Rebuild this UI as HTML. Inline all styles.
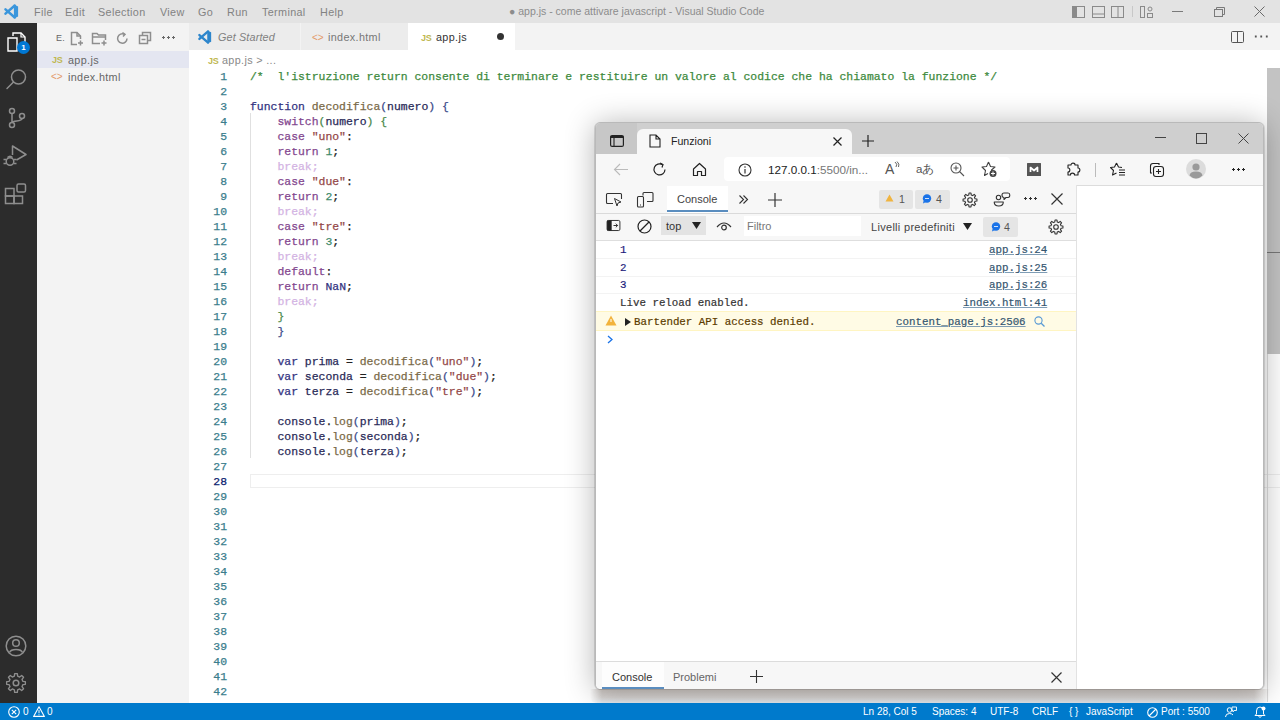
<!DOCTYPE html>
<html><head><meta charset="utf-8">
<style>
*{margin:0;padding:0;box-sizing:border-box}
html,body{width:1280px;height:720px;overflow:hidden;background:#fff;font-family:"Liberation Sans",sans-serif;position:relative}
.a{position:absolute}
svg{position:absolute;overflow:visible}
#title{left:0;top:0;width:1280px;height:23px;background:#e3e3e3}
.menu{top:6px;font-size:10.8px;letter-spacing:0.35px;color:#828282;white-space:nowrap;line-height:13px}
#act{left:0;top:23px;width:37px;height:680px;background:#2c2c2c}
#side{left:37px;top:23px;width:152px;height:680px;background:#f3f3f3}
#tabs{left:190px;top:23px;width:1090px;height:27px;background:#f3f3f3}
.tab{top:0;height:27px;background:#ececec}
.tt{font-size:10.8px;letter-spacing:0.35px;color:#777;white-space:nowrap;line-height:13px}
#editor{left:190px;top:50px;width:1090px;height:652px;background:#fff}
#status{left:0;top:703px;width:1280px;height:17px;background:#007acc;color:#fff;font-size:10px}
.st{top:3px;font-size:10px;line-height:12px;color:#fff;white-space:nowrap}
.code{font-family:"Liberation Mono",monospace;font-size:11.43px;line-height:15px;white-space:pre;-webkit-text-stroke:0.25px currentColor}
#nums{left:190px;top:69px;width:37px;text-align:right;color:#3a7d8c}
#src{left:250px;top:69px;color:#222}
.cm{color:#3d8a3d}.kw{color:#33337f}.fn{color:#7a6a48}.v{color:#2a2a58}.ct{color:#83478f}.s{color:#944848}.n{color:#3d8a6a}.b1{color:#3a4a8a}.b2{color:#4a8a4a}.br{color:#d3b3e3}.cn{color:#33337f}
.ic{stroke:#8e8e8e;fill:none;stroke-width:1.5}
#bw{left:595px;top:122px;width:669px;height:568px;border-radius:6px;background:#f7f7f7;box-shadow:-1px 0 0 rgba(0,0,0,0.12),1px 0 0 rgba(0,0,0,0.10),0 2px 30px rgba(0,0,0,0.30);overflow:hidden;border:1px solid #b9b9b9}
.bi{stroke:#222;fill:none;stroke-width:1.1}
.dt{font-size:10.6px;color:#333;white-space:nowrap;line-height:13px}
.cmsg{font-family:"Liberation Mono",monospace;font-size:10.8px;line-height:13px;white-space:pre;color:#333;-webkit-text-stroke:0.2px currentColor}
.lnk{font-family:"Liberation Mono",monospace;font-size:10.8px;line-height:13px;white-space:pre;color:#35566f;text-decoration:underline;text-decoration-color:#7f9db5;-webkit-text-stroke:0.2px currentColor}
</style></head><body>
<!-- TITLE BAR -->
<div id="title" class="a">
  <svg style="left:4px;top:4px" width="15" height="15" viewBox="0 0 100 100"><path d="M72 10 L10 64 M72 90 L10 36" stroke="#3a96dc" stroke-width="17" stroke-linecap="round"/><path d="M66 4 L94 16 V84 L66 96 Z" fill="#3a96dc"/></svg>
  <div class="a menu" style="left:34px">File</div>
  <div class="a menu" style="left:65px">Edit</div>
  <div class="a menu" style="left:98px">Selection</div>
  <div class="a menu" style="left:160px">View</div>
  <div class="a menu" style="left:198px">Go</div>
  <div class="a menu" style="left:227px">Run</div>
  <div class="a menu" style="left:262px">Terminal</div>
  <div class="a menu" style="left:320px">Help</div>
  <div class="a menu" style="left:509px;top:5px;font-size:10.5px;letter-spacing:0;color:#8c8c8c">● app.js - come attivare javascript - Visual Studio Code</div>
  <svg style="left:1072px;top:6px" width="13" height="12"><rect x="0.5" y="0.5" width="12" height="11" fill="none" stroke="#8a8a8a"/><rect x="1" y="1" width="4" height="10" fill="#8a8a8a"/></svg>
  <svg style="left:1092px;top:6px" width="13" height="12"><rect x="0.5" y="0.5" width="12" height="11" fill="none" stroke="#8a8a8a"/><line x1="0" y1="8" x2="13" y2="8" stroke="#8a8a8a"/></svg>
  <svg style="left:1111px;top:6px" width="13" height="12"><rect x="0.5" y="0.5" width="12" height="11" fill="none" stroke="#8a8a8a"/><line x1="7" y1="0" x2="7" y2="12" stroke="#8a8a8a"/></svg>
  <div class="a" style="left:1132px;top:6px;width:1px;height:11px;background:#c8c8c8"></div>
  <svg style="left:1140px;top:6px" width="13" height="12"><rect x="0.5" y="0.5" width="4" height="11" fill="none" stroke="#8a8a8a"/><circle cx="10" cy="3" r="2" fill="none" stroke="#8a8a8a"/><rect x="7.5" y="7.5" width="5" height="4" fill="none" stroke="#8a8a8a"/></svg>
  <div class="a" style="left:1172px;top:11px;width:11px;height:1px;background:#7a7a7a"></div>
  <svg style="left:1214px;top:7px" width="11" height="10"><rect x="0.5" y="2.5" width="8" height="7" fill="none" stroke="#7a7a7a"/><path d="M2.5 2.5 V0.5 H10.5 V7.5 H8.5" fill="none" stroke="#7a7a7a"/></svg>
  <svg style="left:1254px;top:6px" width="11" height="11"><path d="M0.5 0.5 L10.5 10.5 M10.5 0.5 L0.5 10.5" stroke="#6a6a6a" stroke-width="1"/></svg>
</div>

<!-- ACTIVITY BAR -->
<div id="act" class="a">
  <svg style="left:6px;top:8px" width="22" height="22" viewBox="0 0 22 22"><path d="M7 5 V2 H15 L19 6 V16 H14" fill="none" stroke="#fff" stroke-width="1.4"/><path d="M2 7 H11 V20 H2 Z" fill="none" stroke="#fff" stroke-width="1.4"/><path d="M15 2 V6 H19" fill="none" stroke="#fff" stroke-width="1.2"/></svg>
  <div class="a" style="left:17px;top:18px;width:13px;height:13px;border-radius:50%;background:#0078d4;color:#fff;font-size:8px;line-height:13px;text-align:center;font-weight:bold">1</div>
  <svg style="left:0;top:45px" width="37" height="30" viewBox="0 0 37 30"><circle cx="18.5" cy="9" r="7" class="ic" stroke-width="1.5"/><path d="M13.5 14 L7 20.5" class="ic" stroke-width="1.7" stroke-linecap="round"/></svg>
  <svg style="left:6px;top:84px" width="22" height="22" viewBox="0 0 22 22"><circle cx="6" cy="4" r="2.5" class="ic"/><circle cx="6" cy="18" r="2.5" class="ic"/><circle cx="16" cy="9" r="2.5" class="ic"/><path d="M6 6.5 V15.5 M16 11.5 C16 15 7 13 6 15.5" class="ic"/></svg>
  <svg style="left:0;top:118px" width="37" height="30" viewBox="0 0 37 30"><path d="M12.5 14 V5 L26 13.5 L16.5 19" class="ic" stroke-width="1.4" stroke-linejoin="round"/><circle cx="10" cy="20.5" r="3.8" class="ic" stroke-width="1.4"/><path d="M7.5 16.5 Q10 14 12.5 16.5 M3.5 18.5 H6 M3.5 22.5 H6 M14 18.5 H16.5 M14 22.5 H16.5" class="ic" stroke-width="1.3"/></svg>
  <svg style="left:0;top:158px" width="37" height="30" viewBox="0 0 37 30"><rect x="5.5" y="7.5" width="8.5" height="7.5" class="ic" stroke-width="1.4"/><rect x="5.5" y="15" width="8.5" height="7.5" class="ic" stroke-width="1.4"/><rect x="14" y="15" width="8.5" height="7.5" class="ic" stroke-width="1.4"/><rect x="17" y="3" width="8.5" height="8" rx="1.5" class="ic" stroke-width="1.4"/></svg>
  <svg style="left:4px;top:611px" width="24" height="24" viewBox="0 0 24 24"><circle cx="12" cy="12" r="9.8" class="ic" stroke-width="1.4"/><circle cx="12" cy="9" r="3.3" class="ic" stroke-width="1.5"/><path d="M5.5 18.5 C7 14.5 17 14.5 18.5 18.5" class="ic" stroke-width="1.5"/></svg>
  <svg style="left:4px;top:648px" width="24" height="24" viewBox="0 0 24 24"><path d="M22.40 10.52 L22.40 13.48 L19.58 13.82 L18.65 16.08 L20.40 18.30 L18.30 20.40 L16.08 18.65 L13.82 19.58 L13.48 22.40 L10.52 22.40 L10.18 19.58 L7.92 18.65 L5.70 20.40 L3.60 18.30 L5.35 16.08 L4.42 13.82 L1.60 13.48 L1.60 10.52 L4.42 10.18 L5.35 7.92 L3.60 5.70 L5.70 3.60 L7.92 5.35 L10.18 4.42 L10.52 1.60 L13.48 1.60 L13.82 4.42 L16.08 5.35 L18.30 3.60 L20.40 5.70 L18.65 7.92 L19.58 10.18 Z" class="ic" stroke-width="1.4" stroke-linejoin="round" transform="translate(12 12) scale(0.9) translate(-12 -12)"/><circle cx="12" cy="12" r="2.8" class="ic" stroke-width="1.4"/></svg>
</div>

<!-- SIDEBAR -->
<div id="side" class="a">
  <div class="a tt" style="left:19px;top:9px;font-size:9px;color:#666">E.</div>
  <svg style="left:33px;top:9px" width="14" height="14" viewBox="0 0 14 14"><path d="M7 12.5 H1.5 V0.5 H7 L10.5 4 V7" class="ic" stroke="#666" stroke-width="1"/><path d="M7 0.5 V4 H10.5 M10.5 8.5 V13.5 M8 11 H13" class="ic" stroke="#666" stroke-width="1"/></svg>
  <svg style="left:55px;top:9px" width="15" height="14" viewBox="0 0 15 14"><path d="M8 11.5 H0.5 V1.5 H5 L6.5 3 H13.5 V8" class="ic" stroke="#666" stroke-width="1"/><path d="M0.5 5 H13.5 M12 8.5 V13.5 M9.5 11 H14.5" class="ic" stroke="#666" stroke-width="1"/></svg>
  <svg style="left:79px;top:9px" width="13" height="13" viewBox="0 0 13 13"><path d="M11 6.5 A4.7 4.7 0 1 1 8.5 2.3" class="ic" stroke="#666" stroke-width="1.1"/><path d="M6.5 0.5 L9 2.3 L7 4.5" class="ic" stroke="#666" stroke-width="1.1"/></svg>
  <svg style="left:102px;top:9px" width="13" height="13" viewBox="0 0 13 13"><rect x="0.5" y="3.5" width="8" height="8" class="ic" stroke="#666" stroke-width="1"/><path d="M3.5 3.5 V0.5 H11.5 V8.5 H8.5 M2.5 7.5 H6.5" class="ic" stroke="#666" stroke-width="1"/></svg>
  <div class="a" style="left:124px;top:13px;width:14px;height:3px;background:radial-gradient(circle,#666 1px,transparent 1.2px) 0 0/5px 3px"></div>
  <div class="a" style="left:0;top:28px;width:152px;height:17px;background:#e4e6f1"></div>
  <div class="a" style="left:15px;top:32px;font-size:9px;font-weight:bold;color:#c0b850;line-height:10px;letter-spacing:-0.3px">JS</div>
  <div class="a tt" style="left:31px;top:31px;color:#666">app.js</div>
  <div class="a" style="left:14px;top:48px;font-size:10px;color:#e39a6a;line-height:11px">&lt;&gt;</div>
  <div class="a tt" style="left:31px;top:48px;color:#666">index.html</div>
</div>

<!-- TABS -->
<div class="a" style="left:189px;top:23px;width:1px;height:27px;background:#ececec"></div>
<div id="tabs" class="a">
  <div class="a tab" style="left:0;width:110px"></div>
  <div class="a tab" style="left:110px;width:108px;border-left:1px solid #f3f3f3"></div>
  <div class="a tab" style="left:218px;width:107px;background:#fff"></div>
  <svg style="left:8px;top:7px" width="14" height="14" viewBox="0 0 100 100"><path d="M72 10 L10 64 M72 90 L10 36" stroke="#2d86cc" stroke-width="17" stroke-linecap="round"/><path d="M66 4 L94 16 V84 L66 96 Z" fill="#2d86cc"/></svg>
  <div class="a tt" style="left:28px;top:8px;font-style:italic;letter-spacing:0.15px;color:#808080">Get Started</div>
  <div class="a" style="left:122px;top:9px;font-size:10px;color:#e39a6a;line-height:11px">&lt;&gt;</div>
  <div class="a tt" style="left:138px;top:8px">index.html</div>
  <div class="a" style="left:231px;top:10px;font-size:9px;font-weight:bold;color:#c0b850;line-height:10px;letter-spacing:-0.3px">JS</div>
  <div class="a tt" style="left:246px;top:8px;color:#333">app.js</div>
  <div class="a" style="left:307px;top:10px;width:7px;height:7px;border-radius:50%;background:#333"></div>
  <svg style="left:1041px;top:8px" width="13" height="12"><rect x="0.5" y="0.5" width="12" height="11" rx="1" fill="none" stroke="#555"/><line x1="6.5" y1="0" x2="6.5" y2="12" stroke="#555"/></svg>
  <div class="a" style="left:1063px;top:12px;width:16px;height:3px;background:radial-gradient(circle,#555 1px,transparent 1.2px) 0 0/5.5px 3px"></div>
</div>

<!-- EDITOR -->
<div id="editor" class="a">
  <div class="a" style="left:18px;top:6px;font-size:9px;font-weight:bold;color:#c0b850;line-height:10px;letter-spacing:-0.3px">JS</div>
  <div class="a tt" style="left:32px;top:4px;color:#888">app.js &gt; ...</div>
  <div class="a" style="left:60px;top:424px;width:1030px;height:14px;border:1px solid #eeeeee;border-right:none"></div>
  <div class="a" style="left:60px;top:63px;width:1px;height:345px;background:#e0e0e0"></div>
  <!-- scrollbar -->
  <div class="a" style="left:1077px;top:18px;width:1px;height:634px;background:#dedede"></div>
  <div class="a" style="left:1077px;top:18px;width:13px;height:286px;background:#c3c3c3"></div>
  <div class="a" style="left:1077px;top:202px;width:13px;height:1px;background:#777"></div>
</div>
<div id="nums" class="a code">1
2
3
4
5
6
7
8
9
10
11
12
13
14
15
16
17
18
19
20
21
22
23
24
25
26
27
28
29
30
31
32
33
34
35
36
37
38
39
40
41
42</div>
<div class="a code" style="left:190px;top:474px;width:37px;text-align:right;color:#0b216f;background:#fff">28</div>
<div id="src" class="a code"><span class="cm">/*  l'istruzione return consente di terminare e restituire un valore al codice che ha chiamato la funzione */</span>

<span class="kw">function</span> <span class="fn">decodifica</span><span class="b1">(</span><span class="v">numero</span><span class="b1">)</span> <span class="b1">{</span>
    <span class="ct">switch</span><span class="b2">(</span><span class="v">numero</span><span class="b2">)</span> <span class="b2">{</span>
    <span class="ct">case</span> <span class="s">"uno"</span>:
    <span class="ct">return</span> <span class="n">1</span>;
    <span class="br">break;</span>
    <span class="ct">case</span> <span class="s">"due"</span>:
    <span class="ct">return</span> <span class="n">2</span>;
    <span class="br">break;</span>
    <span class="ct">case</span> <span class="s">"tre"</span>:
    <span class="ct">return</span> <span class="n">3</span>;
    <span class="br">break;</span>
    <span class="ct">default</span>:
    <span class="ct">return</span> <span class="cn">NaN</span>;
    <span class="br">break;</span>
    <span class="b2">}</span>
    <span class="b1">}</span>

    <span class="kw">var</span> <span class="v">prima</span> = <span class="fn">decodifica</span><span class="b1">(</span><span class="s">"uno"</span><span class="b1">)</span>;
    <span class="kw">var</span> <span class="v">seconda</span> = <span class="fn">decodifica</span><span class="b1">(</span><span class="s">"due"</span><span class="b1">)</span>;
    <span class="kw">var</span> <span class="v">terza</span> = <span class="fn">decodifica</span><span class="b1">(</span><span class="s">"tre"</span><span class="b1">)</span>;

    <span class="v">console</span>.<span class="fn">log</span><span class="b1">(</span><span class="v">prima</span><span class="b1">)</span>;
    <span class="v">console</span>.<span class="fn">log</span><span class="b1">(</span><span class="v">seconda</span><span class="b1">)</span>;
    <span class="v">console</span>.<span class="fn">log</span><span class="b1">(</span><span class="v">terza</span><span class="b1">)</span>;

</div>

<!-- BROWSER WINDOW -->
<div id="bw" class="a">
  <div class="a" style="left:0;top:0;width:668px;height:31px;background:#cfcfcf"></div>
  <div class="a" style="left:0;top:0;width:41px;height:31px;background:#c7c7c7"></div>
  <svg style="left:14px;top:12px" width="14" height="12"><rect x="0.6" y="0.6" width="12.8" height="10.8" rx="1.5" fill="none" stroke="#222" stroke-width="1.2"/><line x1="0.6" y1="2" x2="13.4" y2="2" stroke="#222" stroke-width="2"/><line x1="4" y1="2" x2="4" y2="11" stroke="#222" stroke-width="1.1"/></svg>
  <div class="a" style="left:41px;top:6px;width:215px;height:26px;background:#f7f7f7;border-radius:6px 6px 0 0"></div>
  <svg style="left:53px;top:11px" width="12" height="14" viewBox="0 0 12 14"><path d="M1 1 H7 L11 5 V13 H1 Z M7 1 V5 H11" fill="none" stroke="#222" stroke-width="1.1"/></svg>
  <div class="a dt" style="left:75px;top:12px;color:#222">Funzioni</div>
  <svg style="left:237px;top:14px" width="9" height="9"><path d="M0.5 0.5 L8.5 8.5 M8.5 0.5 L0.5 8.5" stroke="#222" stroke-width="1.2"/></svg>
  <svg style="left:266px;top:12px" width="12" height="12"><path d="M6 0 V12 M0 6 H12" stroke="#222" stroke-width="1.2"/></svg>
  <svg style="left:559px;top:14px" width="11" height="2"><line x1="0" y1="0.5" x2="11" y2="0.5" stroke="#444" stroke-width="1"/></svg>
  <svg style="left:600px;top:10px" width="11" height="11"><rect x="0.5" y="0.5" width="10" height="10" fill="none" stroke="#444"/></svg>
  <svg style="left:642px;top:10px" width="11" height="11"><path d="M0.5 0.5 L10.5 10.5 M10.5 0.5 L0.5 10.5" stroke="#444" stroke-width="1"/></svg>
  <!-- toolbar -->
  <svg style="left:17px;top:40px" width="16" height="13"><path d="M1 6.5 H15 M7 1 L1.5 6.5 L7 12" fill="none" stroke="#bbb" stroke-width="1.1"/></svg>
  <svg style="left:56px;top:39px" width="15" height="15" viewBox="0 0 15 15"><path d="M13 7.5 A5.5 5.5 0 1 1 10.5 2.8" fill="none" stroke="#222" stroke-width="1.2"/><path d="M8 1 L11 2.5 L10 5.5" fill="none" stroke="#222" stroke-width="1.2"/></svg>
  <svg style="left:96px;top:39px" width="15" height="15" viewBox="0 0 15 15"><path d="M1.5 7 L7.5 1.5 L13.5 7 V13.5 H9.5 V9.5 H5.5 V13.5 H1.5 Z" fill="none" stroke="#222" stroke-width="1.2" stroke-linejoin="round"/></svg>
  <div class="a" style="left:128px;top:34px;width:286px;height:24px;background:#fff;border-radius:4px"></div>
  <svg style="left:142px;top:40px" width="14" height="14" viewBox="0 0 14 14"><circle cx="7" cy="7" r="6" fill="none" stroke="#333" stroke-width="1.1"/><path d="M7 6 V10.5" stroke="#333" stroke-width="1.2"/><circle cx="7" cy="4" r="0.8" fill="#333"/></svg>
  <div class="a dt" style="left:172px;top:40px;font-size:11.7px;line-height:14px;color:#222">127.0.0.1<span style="color:#777">:5500/in...</span></div>
  <div class="a dt" style="left:289px;top:38px;font-size:14px;color:#555;line-height:16px">A</div>
  <svg style="left:298px;top:38px" width="6" height="7"><path d="M1 1 Q4 3 2 6 M3 0.5 Q6 3 4.5 6" fill="none" stroke="#555" stroke-width="0.9"/></svg>
  <div class="a dt" style="left:320px;top:39px;font-size:11.5px;color:#555;line-height:14px">aあ</div>
  <svg style="left:354px;top:39px" width="15" height="15" viewBox="0 0 15 15"><circle cx="6" cy="6" r="5" fill="none" stroke="#555" stroke-width="1.1"/><path d="M9.5 9.5 L14 14 M6 3.5 V8.5 M3.5 6 H8.5" stroke="#555" stroke-width="1.1"/></svg>
  <svg style="left:385px;top:38px" width="17" height="17" viewBox="0 0 17 17"><path d="M7.5 1 L9.5 5.5 L14 6 L10.5 9 L11 11 M7.5 1 L5.5 5.5 L1 6 L4.5 9.5 L3.5 14.5 L7 12.5" fill="none" stroke="#444" stroke-width="1.1" stroke-linejoin="round"/><circle cx="12" cy="12.5" r="3.5" fill="#444"/><path d="M12 10.5 V14.5 M10 12.5 H14" stroke="#fff" stroke-width="1"/></svg>
  <svg style="left:431px;top:40px" width="14" height="13"><rect x="0" y="0" width="14" height="13" rx="0.5" fill="#555"/><path d="M3.5 9 V4.5 L7 7.5 L10.5 4.5 V9" fill="none" stroke="#fff" stroke-width="1.7" stroke-linejoin="round"/></svg>
  <svg style="left:470px;top:39px" width="15" height="15" viewBox="0 0 15 15"><path d="M5 3 C5 0.5 9 0.5 9 3 H12 V6 C14.5 6 14.5 10 12 10 V13 H8.5 C8.5 10.5 4.5 10.5 4.5 13 H2 V10 C4.5 10 4.5 6 2 6 V3 Z" fill="none" stroke="#222" stroke-width="1.1" stroke-linejoin="round"/></svg>
  <div class="a" style="left:499px;top:40px;width:1px;height:14px;background:#bbb"></div>
  <svg style="left:514px;top:39px" width="16" height="15" viewBox="0 0 16 15"><path d="M6.5 1 L8.5 5 L12 5.5 M6.5 1 L4.5 5 L0.5 5.5 L3.5 8.5 L2.5 13 L6.5 11" fill="none" stroke="#222" stroke-width="1.1" stroke-linejoin="round"/><path d="M9 8 H15 M9 10.5 H15 M9 13 H15" stroke="#222" stroke-width="1.1"/></svg>
  <svg style="left:553px;top:39px" width="16" height="16" viewBox="0 0 16 16"><path d="M3 11 H1.5 V4 Q1.5 1.5 4 1.5 H10 V3" fill="none" stroke="#222" stroke-width="1.1"/><rect x="4.5" y="4.5" width="10" height="10" rx="2.5" fill="none" stroke="#222" stroke-width="1.1"/><path d="M9.5 7 V12 M7 9.5 H12" stroke="#222" stroke-width="1.1"/></svg>
  <svg style="left:590px;top:36px" width="20" height="20" viewBox="0 0 20 20"><circle cx="10" cy="10" r="10" fill="#dcdcdc"/><circle cx="10" cy="8" r="3.6" fill="#9a9a9a"/><path d="M3.5 16.5 Q4 12.5 10 12.5 Q16 12.5 16.5 16.5 Q13.5 19.5 10 19.5 Q6.5 19.5 3.5 16.5 Z" fill="#9a9a9a"/></svg>
  <div class="a" style="left:635px;top:45px;width:15px;height:3px;background:radial-gradient(circle,#222 1.1px,transparent 1.3px) 0 0/5px 3px"></div>
  <div class="a" style="left:0;top:62px;width:668px;height:1px;background:#dcdcdc"></div>

  <!-- DEVTOOLS -->
  <div class="a" style="left:0;top:63px;width:480px;height:504px;background:#fff"></div>
  <div class="a" style="left:481px;top:63px;width:187px;height:504px;background:#fff"></div>
  <div class="a" style="left:0;top:62px;width:480px;height:29px;background:#f7f7f7;border-bottom:1px solid #dadada"></div>
  <svg style="left:10px;top:70px" width="17" height="14" viewBox="0 0 17 14"><path d="M7 10.5 H1.5 Q0.5 10.5 0.5 9.5 V1.5 Q0.5 0.5 1.5 0.5 H14.5 Q15.5 0.5 15.5 1.5 V6" fill="none" stroke="#333" stroke-width="1.1"/><path d="M8.5 5.5 L15 9 L12 10 L11 13 Z" fill="none" stroke="#333" stroke-width="1"/></svg>
  <svg style="left:41px;top:69px" width="17" height="16" viewBox="0 0 17 16"><path d="M6 3.5 V1.5 Q6 0.5 7 0.5 H15 Q16 0.5 16 1.5 V8.5 Q16 9.5 15 9.5 H10" fill="none" stroke="#333" stroke-width="1.1"/><rect x="0.5" y="4.5" width="6" height="10.5" rx="1" fill="none" stroke="#333" stroke-width="1.1"/><path d="M3 13 H4" stroke="#333"/></svg>
  <div class="a" style="left:71px;top:63px;width:61px;height:27px;background:#fff"></div>
  <div class="a" style="left:71px;top:87px;width:61px;height:2px;background:#5a8dbf"></div>
  <div class="a dt" style="left:81px;top:70px;font-size:11px;color:#444">Console</div>
  <svg style="left:143px;top:72px" width="10" height="9"><path d="M0.5 0.5 L4.5 4.5 L0.5 8.5 M4.5 0.5 L8.5 4.5 L4.5 8.5" fill="none" stroke="#333" stroke-width="1.1"/></svg>
  <svg style="left:172px;top:70px" width="14" height="14"><path d="M7 0 V14 M0 7 H14" stroke="#333" stroke-width="1.2"/></svg>
  <div class="a" style="left:283px;top:67px;width:34px;height:19px;background:#e5e5e5;border-radius:2px"></div>
  <svg style="left:289px;top:71px" width="9" height="8"><path d="M4.5 0.5 L8.5 7.5 H0.5 Z" fill="#f0b440"/></svg>
  <div class="a dt" style="left:303px;top:70px;color:#555">1</div>
  <div class="a" style="left:319px;top:67px;width:35px;height:19px;background:#e5e5e5;border-radius:2px"></div>
  <svg style="left:326px;top:71px" width="10" height="10"><circle cx="5" cy="4.5" r="4.2" fill="#1a73e8"/><path d="M1.5 7 L1 9.5 L4 8" fill="#1a73e8"/><path d="M3 4.5 H7" stroke="#fff" stroke-width="0.8"/></svg>
  <div class="a dt" style="left:340px;top:70px;color:#555">4</div>
  <svg style="left:366px;top:69px" width="16" height="16" viewBox="0 0 16 16"><path d="M14.93 7.01 L14.93 8.99 L13.06 9.21 L12.43 10.72 L13.60 12.20 L12.20 13.60 L10.72 12.43 L9.21 13.06 L8.99 14.93 L7.01 14.93 L6.79 13.06 L5.28 12.43 L3.80 13.60 L2.40 12.20 L3.57 10.72 L2.94 9.21 L1.07 8.99 L1.07 7.01 L2.94 6.79 L3.57 5.28 L2.40 3.80 L3.80 2.40 L5.28 3.57 L6.79 2.94 L7.01 1.07 L8.99 1.07 L9.21 2.94 L10.72 3.57 L12.20 2.40 L13.60 3.80 L12.43 5.28 L13.06 6.79 Z" fill="none" stroke="#333" stroke-width="1.1" stroke-linejoin="round"/><circle cx="8" cy="8" r="2.3" fill="none" stroke="#333" stroke-width="1.1"/></svg>
  <svg style="left:397px;top:67px" width="18" height="17" viewBox="0 0 18 17"><circle cx="5.5" cy="7.5" r="2.2" fill="none" stroke="#333" stroke-width="1.1"/><path d="M1.2 12 H10.3 Q10.3 16 5.75 16 Q1.2 16 1.2 12 Z" fill="none" stroke="#333" stroke-width="1.1" stroke-linejoin="round"/><path d="M11 3 H15 Q16.8 3 16.8 5 Q16.8 7.5 15 7.5 H13 L11 9.5 V7.5 Q9 7.5 9 5 Q9 3 11 3 Z" fill="none" stroke="#333" stroke-width="1.1" stroke-linejoin="round"/></svg>
  <div class="a" style="left:427px;top:74px;width:15px;height:3px;background:radial-gradient(circle,#333 1.1px,transparent 1.3px) 0 0/5px 3px"></div>
  <svg style="left:455px;top:70px" width="12" height="12"><path d="M0.5 0.5 L11.5 11.5 M11.5 0.5 L0.5 11.5" stroke="#333" stroke-width="1.2"/></svg>

  <div class="a" style="left:0;top:91px;width:480px;height:27px;background:#f7f7f7;border-bottom:1px solid #dedede"></div>
  <svg style="left:10px;top:97px" width="15" height="11" viewBox="0 0 15 12"><rect x="0.5" y="0.5" width="14" height="11" rx="1.5" fill="none" stroke="#222" stroke-width="1"/><rect x="0.5" y="0.5" width="5" height="11" fill="#222"/><path d="M7.5 6 H12 M10 4 L12 6 L10 8" fill="none" stroke="#222" stroke-width="1"/></svg>
  <svg style="left:41px;top:96px" width="15" height="15" viewBox="0 0 15 15"><circle cx="7.5" cy="7.5" r="6.5" fill="none" stroke="#222" stroke-width="1.2"/><path d="M3 12 L12 3" stroke="#222" stroke-width="1.2"/></svg>
  <div class="a" style="left:65px;top:93px;width:45px;height:19px;background:#e3e3e3"></div>
  <div class="a dt" style="left:70px;top:97px;font-size:11px;color:#333">top</div>
  <svg style="left:96px;top:99px" width="9" height="7"><path d="M0 0 H9 L4.5 7 Z" fill="#222"/></svg>
  <svg style="left:120px;top:98px" width="16" height="10" viewBox="0 0 16 10"><path d="M1 6 Q8 -2 15 6" fill="none" stroke="#333" stroke-width="1.2"/><circle cx="8" cy="6.5" r="2.3" fill="none" stroke="#333" stroke-width="1.2"/></svg>
  <div class="a" style="left:148px;top:93px;width:117px;height:20px;background:#fff"></div>
  <div class="a dt" style="left:151px;top:97px;font-size:11px;color:#777">Filtro</div>
  <div class="a dt" style="left:275px;top:98px;font-size:11px;letter-spacing:0.3px;color:#444">Livelli predefiniti</div>
  <svg style="left:367px;top:100px" width="9" height="7"><path d="M0 0 H9 L4.5 7 Z" fill="#222"/></svg>
  <div class="a" style="left:387px;top:94px;width:35px;height:20px;background:#e5e5e5;border-radius:2px"></div>
  <svg style="left:395px;top:99px" width="10" height="10"><circle cx="5" cy="4.5" r="4.2" fill="#1a73e8"/><path d="M1.5 7 L1 9.5 L4 8" fill="#1a73e8"/><path d="M3 4.5 H7" stroke="#fff" stroke-width="0.8"/></svg>
  <div class="a dt" style="left:408px;top:98px;color:#555">4</div>
  <svg style="left:452px;top:96px" width="16" height="16" viewBox="0 0 16 16"><path d="M14.93 7.01 L14.93 8.99 L13.06 9.21 L12.43 10.72 L13.60 12.20 L12.20 13.60 L10.72 12.43 L9.21 13.06 L8.99 14.93 L7.01 14.93 L6.79 13.06 L5.28 12.43 L3.80 13.60 L2.40 12.20 L3.57 10.72 L2.94 9.21 L1.07 8.99 L1.07 7.01 L2.94 6.79 L3.57 5.28 L2.40 3.80 L3.80 2.40 L5.28 3.57 L6.79 2.94 L7.01 1.07 L8.99 1.07 L9.21 2.94 L10.72 3.57 L12.20 2.40 L13.60 3.80 L12.43 5.28 L13.06 6.79 Z" fill="none" stroke="#333" stroke-width="1.1" stroke-linejoin="round"/><circle cx="8" cy="8" r="2.3" fill="none" stroke="#333" stroke-width="1.1"/></svg>

  <!-- messages -->
  <div class="a" style="left:0;top:135px;width:480px;height:1px;background:#f3f3f3"></div>
  <div class="a" style="left:0;top:153px;width:480px;height:1px;background:#f3f3f3"></div>
  <div class="a" style="left:0;top:170px;width:480px;height:1px;background:#f3f3f3"></div>
  <div class="a cmsg" style="left:24px;top:121px;color:#1c1c7c">1</div>
  <div class="a cmsg" style="left:24px;top:139px;color:#1c1c7c">2</div>
  <div class="a cmsg" style="left:24px;top:156px;color:#1c1c7c">3</div>
  <div class="a lnk" style="left:393px;top:121px">app.js:24</div>
  <div class="a lnk" style="left:393px;top:139px">app.js:25</div>
  <div class="a lnk" style="left:393px;top:156px">app.js:26</div>
  <div class="a cmsg" style="left:24px;top:174px">Live reload enabled.</div>
  <div class="a lnk" style="left:367px;top:174px">index.html:41</div>
  <div class="a" style="left:0;top:188px;width:480px;height:20px;background:#fffbe5;border-top:1px solid #fff5c2;border-bottom:1px solid #fff5c2"></div>
  <svg style="left:9px;top:192px" width="12" height="11"><path d="M6 0.5 L11.5 10.5 H0.5 Z" fill="#f2b33d"/><path d="M6 4 V7" stroke="#fff" stroke-width="1"/></svg>
  <svg style="left:29px;top:195px" width="6" height="8"><path d="M0 0 L6 4 L0 8 Z" fill="#222"/></svg>
  <div class="a cmsg" style="left:38px;top:193px;color:#5c3c00">Bartender API access denied.</div>
  <div class="a lnk" style="left:300px;top:193px">content_page.js:2506</div>
  <svg style="left:438px;top:193px" width="11" height="11" viewBox="0 0 11 11"><circle cx="4.5" cy="4.5" r="3.6" fill="none" stroke="#5a9bd5" stroke-width="1.1"/><path d="M7.2 7.2 L10.5 10.5" stroke="#5a9bd5" stroke-width="1.3"/></svg>
  <svg style="left:11px;top:212px" width="6" height="9"><path d="M1 1 L5 4.5 L1 8" fill="none" stroke="#1a73e8" stroke-width="1.3"/></svg>

  <!-- drawer -->
  <div class="a" style="left:0;top:538px;width:480px;height:28px;background:#f7f7f7;border-top:1px solid #dcdcdc"></div>
  <div class="a" style="left:6px;top:539px;width:62px;height:27px;background:#fdfdfd"></div>
  <div class="a" style="left:6px;top:564px;width:62px;height:2px;background:#5a8dbf"></div>
  <div class="a dt" style="left:16px;top:548px;font-size:11px;color:#333">Console</div>
  <div class="a dt" style="left:77px;top:548px;font-size:11px;color:#666">Problemi</div>
  <svg style="left:154px;top:547px" width="13" height="13"><path d="M6.5 0 V13 M0 6.5 H13" stroke="#333" stroke-width="1.1"/></svg>
  <div class="a" style="left:480px;top:62px;width:1px;height:504px;background:#e2e2e2"></div>
  <svg style="left:455px;top:549px" width="11" height="11"><path d="M0.5 0.5 L10.5 10.5 M10.5 0.5 L0.5 10.5" stroke="#333" stroke-width="1.2"/></svg>
</div>

<div class="a" style="left:590px;top:689px;width:680px;height:14px;background:linear-gradient(to bottom,rgba(110,95,85,0.38),rgba(120,110,105,0.30) 60%,rgba(140,160,180,0.25));-webkit-mask-image:linear-gradient(to right,transparent,#000 12px,#000 664px,transparent);border-radius:0 0 6px 6px"></div>
<!-- STATUS BAR -->
<div id="status" class="a">
  <svg style="left:8px;top:3px" width="12" height="12"><circle cx="6" cy="6" r="5.3" fill="none" stroke="#fff" stroke-width="1.1"/><path d="M3.8 3.8 L8.2 8.2 M8.2 3.8 L3.8 8.2" stroke="#fff" stroke-width="1.1"/></svg>
  <div class="a st" style="left:23px">0</div>
  <svg style="left:33px;top:3px" width="12" height="11"><path d="M6 0.8 L11.4 10.4 H0.6 Z" fill="none" stroke="#fff" stroke-width="1.1" stroke-linejoin="round"/><path d="M6 4 V7.3 M6 8.3 V9.2" stroke="#fff" stroke-width="1"/></svg>
  <div class="a st" style="left:47px">0</div>
  <div class="a st" style="left:863px">Ln 28, Col 5</div>
  <div class="a st" style="left:932px">Spaces: 4</div>
  <div class="a st" style="left:990px">UTF-8</div>
  <div class="a st" style="left:1032px">CRLF</div>
  <div class="a st" style="left:1069px">{ }</div>
  <div class="a st" style="left:1086px">JavaScript</div>
  <svg style="left:1147px;top:4px" width="11" height="11"><circle cx="5.5" cy="5.5" r="4.8" fill="none" stroke="#fff" stroke-width="1.1"/><path d="M2 9 L9 2" stroke="#fff" stroke-width="1.1"/></svg>
  <div class="a st" style="left:1161px">Port : 5500</div>
  <svg style="left:1225px;top:3px" width="12" height="12" viewBox="0 0 12 12"><circle cx="4.5" cy="4" r="2.3" fill="none" stroke="#fff" stroke-width="1"/><path d="M0.5 11 Q0.5 7.5 4.5 7.5 Q7 7.5 8 9" fill="none" stroke="#fff" stroke-width="1"/><path d="M7 1 H11.5 V4.5 H9 L8 6 V4.5 H7 Z" fill="none" stroke="#fff" stroke-width="0.9"/></svg>
  <svg style="left:1254px;top:3px" width="12" height="12" viewBox="0 0 12 12"><path d="M6 1 Q2.5 1 2.5 5 V8 L1 9.5 H11 L9.5 8 V5 Q9.5 1 6 1 Z M4.5 10.5 Q6 12 7.5 10.5" fill="none" stroke="#fff" stroke-width="1"/><circle cx="9.5" cy="2.5" r="2" fill="#fff"/></svg>
</div>
</body></html>
